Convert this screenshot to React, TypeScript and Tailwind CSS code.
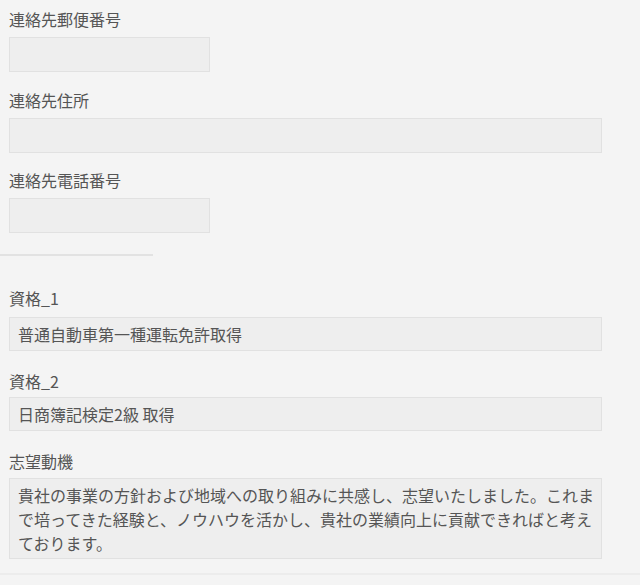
const font = "font-['Noto_Sans_CJK_JP','Noto_Sans',sans-serif]";

const Label = ({ text, className = '' }: { text: string; className?: string }) => (
  <div className={`text-[16px] leading-[22px] text-[#555] ${className}`}>{text}</div>
);

const Field = ({ value = '', wide = false, className = '' }: { value?: string; wide?: boolean; className?: string }) => (
  <div
    className={`flex items-center box-border bg-[#eeeeee] border border-[#e1e1e1] pl-[8px] text-[16px] text-[#555] ${
      wide ? 'w-[593px]' : 'w-[201px]'
    } ${className}`}
  >
    {value}
  </div>
);

export default function App() {
  return (
    <div className={`min-h-[585px] bg-[#f4f4f4] ${font}`}>
      <div className="pl-[9px] pt-[8px]">
        <Label text="連絡先郵便番号" />
        <Field className="mt-[7px] h-[35px]" />

        <Label text="連絡先住所" className="mt-[17px]" />
        <Field wide className="mt-[7px] h-[35px]" />

        <Label text="連絡先電話番号" className="mt-[16px]" />
        <Field className="mt-[7px] h-[35px]" />
      </div>

      <div className="mt-[21px] h-[2px] w-[153px] bg-[#e2e2e2]" />

      <div className="pl-[9px]">
        <Label text="資格_1" className="mt-[31px]" />
        <Field wide value="普通自動車第一種運転免許取得" className="mt-[8px] h-[34px]" />

        <Label text="資格_2" className="mt-[19px]" />
        <Field wide value="日商簿記検定2級 取得" className="mt-[5px] h-[34px]" />

        <Label text="志望動機" className="mt-[19px]" />
        <div className="mt-[6px] box-border h-[81px] w-[593px] bg-[#eeeeee] border border-[#e1e1e1] pl-[8px] pr-[6px] pt-[4px] text-[16px] leading-[24px] text-[#555]">
          貴社の事業の方針および地域への取り組みに共感し、志望いたしました。これまで培ってきた経験と、ノウハウを活かし、貴社の業績向上に貢献できればと考えております。
        </div>
      </div>

      <div className="mt-[14px] h-[2px] w-full bg-[#ececec]" />
    </div>
  );
}
